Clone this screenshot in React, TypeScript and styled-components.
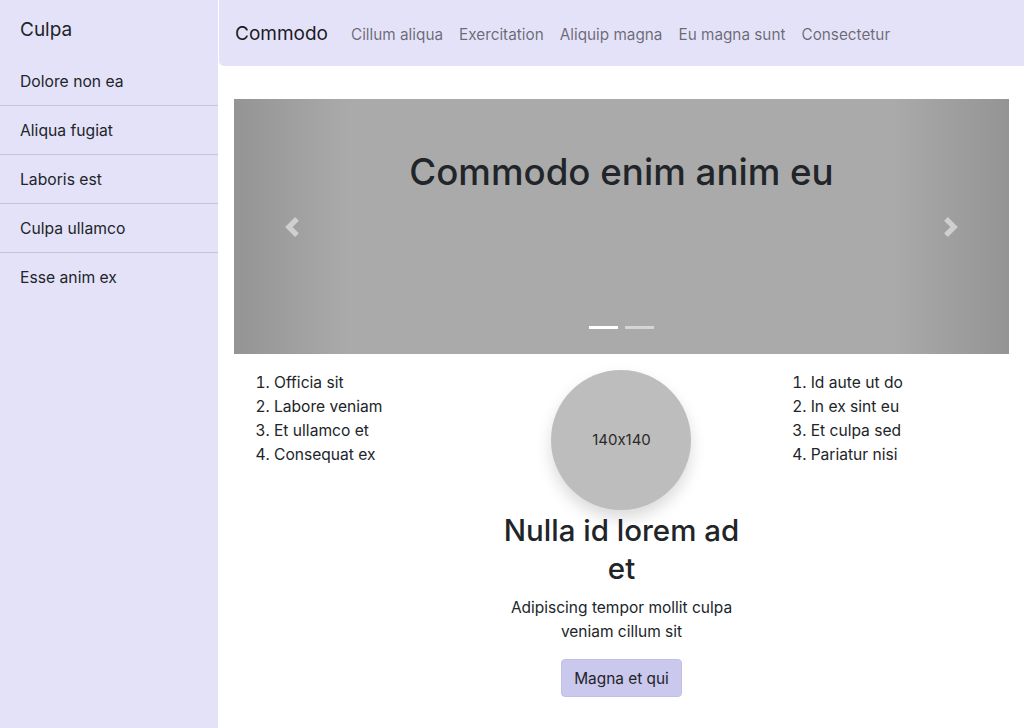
import React from "react";
import styled, { createGlobalStyle } from "styled-components";

const Global = createGlobalStyle`
  html, body { margin: 0; padding: 0; background: #fff; }
  body {
    font-family: Inter, "Noto Sans", "Liberation Sans", sans-serif;
    font-size: 16px;
    line-height: 24px;
    color: #212529;
    font-feature-settings: "calt" 0;
  }
  * { box-sizing: border-box; }
`;

const Layout = styled.div`
  display: flex;
  min-height: 728px;
`;

const Sidebar = styled.aside`
  width: 218px;
  flex: 0 0 218px;
  background: #e4e2f8;
  display: flex;
  flex-direction: column;
`;

const SideTitle = styled.div`
  height: 57px;
  padding: 18px 20px 0;
  font-size: 19px;
  line-height: 24px;
`;

const SideItem = styled.a<{ $last?: boolean }>`
  display: block;
  padding: 13px 20px 11px;
  line-height: 24px;
  color: #212529;
  text-decoration: none;
  font-size: 15.7px;
  border-bottom: ${(p) => (p.$last ? "none" : "1px solid rgba(0,0,0,0.13)")};
`;

const Main = styled.main`
  flex: 1;
  margin-left: 1px;
  display: flex;
  flex-direction: column;
  min-width: 0;
`;

const Navbar = styled.nav`
  height: 66px;
  background: #e4e2f8;
  border-bottom-left-radius: 5px;
  display: flex;
  align-items: center;
  padding: 3px 16px 0;
`;

const Brand = styled.span`
  font-size: 19px;
  line-height: 30px;
  color: rgba(0, 0, 0, 0.9);
  margin-right: 15px;
  margin-top: -1px;
`;

const NavLink = styled.a`
  padding: 0 8px;
  color: rgba(0, 0, 0, 0.55);
  text-decoration: none;
  font-size: 15.3px;
`;

const Content = styled.div`
  padding: 33px 15px 0 15px;
`;

const Carousel = styled.div`
  position: relative;
  height: 255px;
  background: #aaa;
  overflow: hidden;
`;

const SlideTitle = styled.h1`
  margin: 0;
  padding-top: 49px;
  text-align: center;
  font-size: 36.7px;
  line-height: 48px;
  font-weight: 500;
  color: #212529;
`;

const Control = styled.button<{ $side: "left" | "right" }>`
  position: absolute;
  top: 0;
  bottom: 0;
  ${(p) => p.$side}: 0;
  width: 15%;
  border: 0;
  padding: 0;
  display: flex;
  align-items: center;
  justify-content: center;
  background: linear-gradient(
    ${(p) => (p.$side === "left" ? "to right" : "to left")},
    rgba(0, 0, 0, 0.13),
    rgba(0, 0, 0, 0)
  );
  cursor: pointer;
  svg { opacity: 0.5; }
`;

const Indicators = styled.div`
  position: absolute;
  left: 0;
  right: 0;
  bottom: 25px;
  display: flex;
  justify-content: center;
  gap: 7px;
`;

const Indicator = styled.span<{ $active?: boolean }>`
  width: 29px;
  height: 3px;
  background: #fff;
  opacity: ${(p) => (p.$active ? 1 : 0.5)};
`;

const Row = styled.div`
  display: grid;
  grid-template-columns: 1fr 1fr 1fr;
  margin-top: 16px;
`;

const List = styled.ol<{ $pad: number }>`
  margin: 1px 0 0;
  padding-left: ${(p) => p.$pad}px;
  line-height: 24px;
  font-size: 15.6px;
`;

const Center = styled.div`
  display: flex;
  flex-direction: column;
  align-items: center;
  text-align: center;
  padding: 0 8px;
`;

const Avatar = styled.div`
  width: 140px;
  height: 140px;
  border-radius: 50%;
  background: #bdbdbd;
  box-shadow: 0 8px 16px rgba(0, 0, 0, 0.15);
  display: flex;
  align-items: center;
  justify-content: center;
  color: #2a2a2a;
  font-size: 15px;
`;

const Heading = styled.h2`
  margin: 1px 0 9px;
  font-size: 29.5px;
  line-height: 38px;
  font-weight: 500;
`;

const Para = styled.p`
  margin: 0 0 15px;
  font-size: 15.5px;
  padding: 0 4px;
`;

const Button = styled.button`
  font-family: inherit;
  font-size: 15.4px;
  line-height: 24px;
  padding: 7px 12px 5px;
  color: #212529;
  background: #cbc8ee;
  border: 1px solid #c2bfe6;
  border-radius: 4px;
`;

const Chevron = ({ dir }: { dir: "l" | "r" }) => (
  <svg width="20" height="20" viewBox="0 0 8 8" fill="#fff">
    {dir === "l" ? (
      <path d="M5.25 0l-4 4 4 4 1.5-1.5L4.25 4l2.5-2.5L5.25 0z" />
    ) : (
      <path d="M2.75 0l-1.5 1.5L3.75 4l-2.5 2.5L2.75 8l4-4-4-4z" />
    )}
  </svg>
);

export default function App() {
  const side = ["Dolore non ea", "Aliqua fugiat", "Laboris est", "Culpa ullamco", "Esse anim ex"];
  const links = ["Cillum aliqua", "Exercitation", "Aliquip magna", "Eu magna sunt", "Consectetur"];
  return (
    <>
      <Global />
      <Layout>
        <Sidebar>
          <SideTitle>Culpa</SideTitle>
          {side.map((s, i) => (
            <SideItem key={s} $last={i === side.length - 1}>
              {s}
            </SideItem>
          ))}
        </Sidebar>
        <Main>
          <Navbar>
            <Brand>Commodo</Brand>
            {links.map((l) => (
              <NavLink key={l}>{l}</NavLink>
            ))}
          </Navbar>
          <Content>
            <Carousel>
              <SlideTitle>Commodo enim anim eu</SlideTitle>
              <Control $side="left" aria-label="Previous">
                <Chevron dir="l" />
              </Control>
              <Control $side="right" aria-label="Next">
                <Chevron dir="r" />
              </Control>
              <Indicators>
                <Indicator $active />
                <Indicator />
              </Indicators>
            </Carousel>
            <Row>
              <List $pad={40}>
                <li>Officia sit</li>
                <li>Labore veniam</li>
                <li>Et ullamco et</li>
                <li>Consequat ex</li>
              </List>
              <Center>
                <Avatar>140x140</Avatar>
                <Heading>Nulla id lorem ad et</Heading>
                <Para>Adipiscing tempor mollit culpa veniam cillum sit</Para>
                <Button>Magna et qui</Button>
              </Center>
              <List $pad={60}>
                <li>Id aute ut do</li>
                <li>In ex sint eu</li>
                <li>Et culpa sed</li>
                <li>Pariatur nisi</li>
              </List>
            </Row>
          </Content>
        </Main>
      </Layout>
    </>
  );
}
